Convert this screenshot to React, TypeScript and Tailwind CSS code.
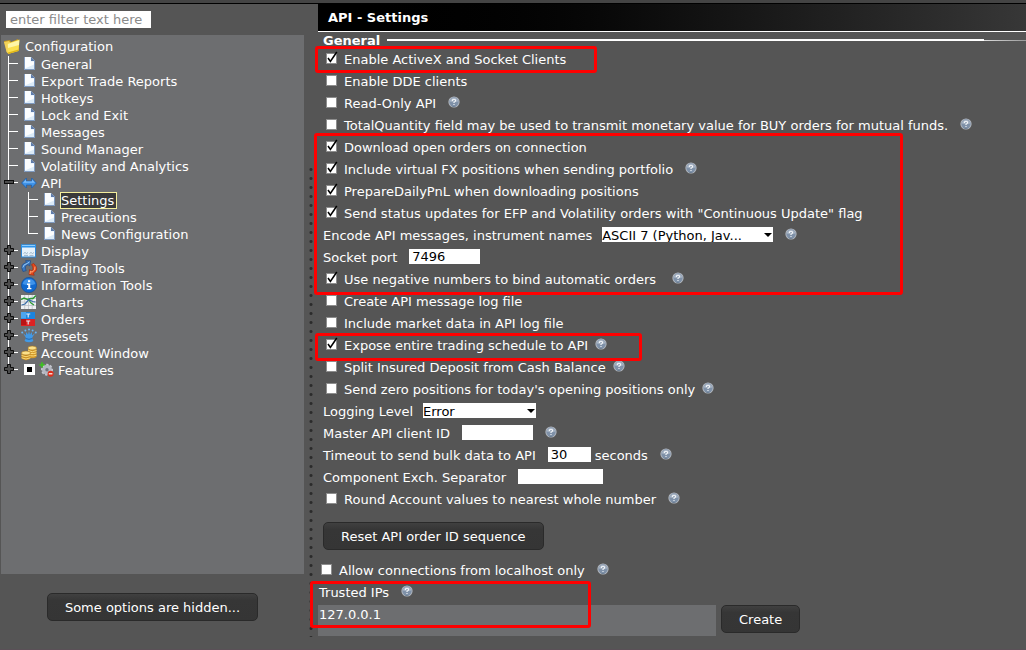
import { useId, useState } from "react";
import type { ReactNode } from "react";

/* ---------- icons ---------- */

function HelpIcon() {
  return (
    <svg width="12" height="12" viewBox="0 0 12 12" role="img" aria-label="Help" className="mb-0.5 shrink-0">
      <circle cx="6" cy="6" r="5.6" fill="#b4b9c0" />
      <circle cx="6" cy="6" r="4.7" fill="#7f91a8" />
      <path d="M1.6 5.4 A4.5 4.5 0 0 1 10.4 5.4 Q6 7 1.6 5.4Z" fill="#a3b0c1" />
      <path d="M8.5 9.8 A4.6 4.6 0 0 1 3.2 9.7 Q6 10.6 8.5 9.8Z" fill="#4f637d" />
      <path d="M4.3 4.9 Q4.3 3.3 6 3.3 Q7.7 3.3 7.6 4.7 Q7.5 5.5 6 6.3 V7 M6 7.9 V8.9" fill="none" stroke="#f4f7fa" strokeWidth="1.1" />
    </svg>
  );
}

function FolderIcon() {
  return (
    <svg width="18" height="17" viewBox="0 0 18 17" className="shrink-0">
      <path d="M1 3 L7 2 L8 4 L15 1 L16 12 L4 15 Z" fill="#c79a1c" />
      <path d="M1 4 L6 3 L7.5 5 L5 15.5 L3.6 14 Z" fill="#f3d25a" />
      <path d="M4.5 5.5 L16.5 1.5 L15.5 13 L5 16 Z" fill="#fbe04f" />
      <path d="M4.8 6 L16.2 2.2 L16 7 L5 10 Z" fill="#fff6a8" />
      <path d="M5 16 L15.5 13 L15.6 11.6 L5 14.6Z" fill="#e0b416" />
    </svg>
  );
}

function DocIcon() {
  return (
    <svg width="11" height="13" viewBox="0 0 11 13" className="shrink-0">
      <path d="M0 0 H7 L11 4 V13 H0 Z" fill="#dcebf8" />
      <path d="M0.8 0 H6.6 V4.4 H10 V7.5 L0.8 11.5 Z" fill="#fbfdff" />
      <path d="M7 0 V4 H11 Z" fill="#5f7cab" />
      <path d="M0.4 0 V12.6 H10.6 V4" fill="none" stroke="#5b78a8" strokeWidth="0.8" />
    </svg>
  );
}

function ApiIcon() {
  return (
    <svg width="16" height="12" viewBox="0 0 16 12">
      <path d="M0.6 6 L5.4 1 V4 H10.6 V1 L15.4 6 L10.6 11 V8 H5.4 V11 Z" fill="#3f93e8" stroke="#1b5cab" strokeWidth="0.7" />
      <path d="M2 5.8 L5 2.6 V4.6 H11 V2.6 L14 5.8Z" fill="#7dbcf8" />
    </svg>
  );
}

function DisplayIcon() {
  return (
    <svg width="15" height="14" viewBox="0 0 15 14">
      <rect x="0.5" y="1" width="14" height="12" fill="#e6f1fa" stroke="#2f86d6" />
      <rect x="0" y="0.5" width="15" height="3" fill="#2f94ea" />
      <rect x="1" y="1" width="13" height="1" fill="#8fcbfa" />
      <path d="M2.5 9.5 l1.5-1 1.5 1 1.5-1 M8.5 9.5 l1.5-1 1.5 1 1.5-1 M3 11.4 H7 M8.5 11.4 H12.5" stroke="#8da7bd" strokeWidth="0.8" fill="none" />
    </svg>
  );
}

function TradingIcon() {
  return (
    <svg width="17" height="16" viewBox="0 0 17 16">
      <path d="M2 11.5 Q-1.5 4 5.4 2.6 L4.6 0.6 L9.6 0.8 L8.6 6 L7 4.6 Q2.8 6 5.2 10.6 Z" fill="#3a78bf" stroke="#1b4a8c" strokeWidth="0.7" />
      <path d="M1.8 7.5 Q2.4 4.2 6.4 3.4 L8.6 1.8" fill="none" stroke="#9ccbf5" strokeWidth="1" />
      <path d="M12.6 3.4 Q19 9.6 12.4 13 L13.2 15.2 L8 14.6 L8.6 9.6 L10.4 11 Q13.6 8.8 10.6 4.6 Z" fill="#e4481c" stroke="#ab2a0c" strokeWidth="0.7" />
      <path d="M9 14 L9.4 11.2 L11 12.2 Q14.8 10.4 14 6.6" fill="none" stroke="#ffab78" strokeWidth="1" />
    </svg>
  );
}

function InfoIcon() {
  return (
    <svg width="16" height="16" viewBox="0 0 16 16">
      <circle cx="8" cy="8" r="7.6" fill="#1169cf" stroke="#0a4c9c" strokeWidth="0.6" />
      <path d="M1.6 7 A6.6 6.6 0 0 1 14.4 7 Q8 9.5 1.6 7Z" fill="#3f93ea" />
      <rect x="7" y="3.2" width="2.2" height="2" fill="#fff" />
      <path d="M6 6.6 H9.2 V11 H10.4 V12.3 H6 V11 H7.2 V7.9 H6 Z" fill="#fff" />
    </svg>
  );
}

function ChartsIcon() {
  return (
    <svg width="15" height="14" viewBox="0 0 15 14">
      <rect width="15" height="14" fill="#eef0f2" />
      <path d="M0 3.5 H15 M0 7 H15 M0 10.5 H15 M3.7 0 V14 M7.5 0 V14 M11.2 0 V14" stroke="#b4bac2" strokeWidth="0.7" />
      <path d="M0 4.5 L3 3 L6.5 4.5 L9.5 3.5 L12 3.6 L15 0.6" fill="none" stroke="#2c9a35" strokeWidth="1.5" />
      <path d="M8 5 L10 8 L13 10" fill="none" stroke="#2c9a35" strokeWidth="1.2" />
      <path d="M0.5 10 L4 9 L8 4.6 L11.5 6.5 L14.5 7" fill="none" stroke="#3a6ea8" strokeWidth="1.2" />
    </svg>
  );
}

function OrdersIcon() {
  return (
    <svg width="14" height="14" viewBox="0 0 14 14">
      <rect width="14" height="7" fill="#1c84dd" />
      <rect y="7" width="14" height="7" fill="#dc2222" />
      <path d="M0 0 H5 V6.5 H0Z" fill="#4ba5ef" />
      <path d="M0 7 H5 V13 H0Z" fill="#b91414" />
      <path d="M5.2 2 H9.2 M7.2 2 V5.4 M5.2 9 H9.2 M7.2 9 V12.4" stroke="#e6eef6" strokeWidth="1.1" />
    </svg>
  );
}

function PresetsIcon() {
  return (
    <svg width="16" height="15" viewBox="0 0 16 15">
      <path d="M2 5 L5 7.4 L5 4 L7 6.6 L8 3 L9 6.6 L11 4 L11 7.4 L14 5 L11 10 L12.5 13 Q8 15.5 3.5 13 L5 10 Z" fill="#4199e6" />
      <g fill="#69b7f7">
        <circle cx="1.2" cy="4.6" r="1" />
        <circle cx="4.4" cy="2.6" r="1" />
        <circle cx="8" cy="1.4" r="1" />
        <circle cx="11.6" cy="2.6" r="1" />
        <circle cx="14.8" cy="4.6" r="1" />
      </g>
      <path d="M4.8 10.6 Q8 12 11.2 10.6" stroke="#2268b3" fill="none" />
    </svg>
  );
}

function CoinsIcon() {
  return (
    <svg width="16" height="16" viewBox="0 0 16 16">
      <path d="M7 3 V12 Q11.5 14.5 15.5 12 V3 Z" fill="#d49a2a" />
      <path d="M0.5 8 V13.5 Q5 17 9.5 13.5 V8 Z" fill="#c98f24" />
      <ellipse cx="11.2" cy="3" rx="4.3" ry="2" fill="#fbe08a" stroke="#a8741a" strokeWidth="0.6" />
      <path d="M7 5.5 Q11.5 8 15.5 5.5 M9.5 8.4 Q13 9 15.5 7.8 M9.5 10.8 Q13 11.4 15.5 10.2" fill="none" stroke="#fbdc7c" strokeWidth="1" />
      <ellipse cx="5" cy="8" rx="4.5" ry="2" fill="#fbe08a" stroke="#a8741a" strokeWidth="0.6" />
      <path d="M0.6 10.5 Q5 13 9.4 10.5 M0.6 12.8 Q5 15.3 9.4 12.8" fill="none" stroke="#fbdc7c" strokeWidth="1" />
    </svg>
  );
}

function FeaturesIcon() {
  return (
    <svg width="15" height="15" viewBox="0 0 15 15" className="mb-0.5 shrink-0">
      <circle cx="8" cy="7.8" r="5" fill="#a9acb6" stroke="#c6c9d2" strokeWidth="2" strokeDasharray="2.2 1.5" />
      <circle cx="8" cy="7.8" r="4.6" fill="#b5b8c2" />
      <circle cx="8" cy="7.8" r="1.7" fill="#73767f" />
      <path d="M3 0.2 V5.4 M0.4 2.8 H5.6" stroke="#3fbf25" strokeWidth="1.8" />
      <circle cx="11.6" cy="11.8" r="3" fill="#dd2f1c" />
      <path d="M9.8 11.8 H13.4" stroke="#fff" strokeWidth="1.2" />
    </svg>
  );
}

/* ---------- tree ---------- */

type Branch = "tee" | "end" | "through" | "plus" | "plusEnd" | "minus";

function Connector({ kind }: { kind: Branch }) {
  const half = kind === "end" || kind === "plusEnd";
  return (
    <svg width="20" height="17" viewBox="0 0 20 17" className="shrink-0" aria-hidden="true">
      <rect x="7" y="0" width="1" height={half ? 8 : 17} fill="#fff" />
      {kind !== "through" && <rect x="7" y="7" width="10" height="1" fill="#fff" />}
      {(kind === "plus" || kind === "plusEnd") && (
        <path d="M6.5 2.5 H9.5 V5.5 H12.5 V8.5 H9.5 V11.5 H6.5 V8.5 H3.5 V5.5 H6.5 Z" fill="#4c4c4c" stroke="#0c0c0c" strokeWidth="1" />
      )}
      {kind === "minus" && <rect x="3.5" y="5.5" width="9" height="3" fill="#4c4c4c" stroke="#0c0c0c" strokeWidth="1" />}
    </svg>
  );
}

interface Node {
  label: string;
  lines: Branch[];
  icon: ReactNode;
  selected?: boolean;
}

const doc = (
  <span className="pl-[3px]">
    <DocIcon />
  </span>
);

const nodes: Node[] = [
  { label: "General", lines: ["tee"], icon: doc },
  { label: "Export Trade Reports", lines: ["tee"], icon: doc },
  { label: "Hotkeys", lines: ["tee"], icon: doc },
  { label: "Lock and Exit", lines: ["tee"], icon: doc },
  { label: "Messages", lines: ["tee"], icon: doc },
  { label: "Sound Manager", lines: ["tee"], icon: doc },
  { label: "Volatility and Analytics", lines: ["tee"], icon: doc },
  { label: "API", lines: ["minus"], icon: <ApiIcon /> },
  { label: "Settings", lines: ["through", "tee"], icon: doc, selected: true },
  { label: "Precautions", lines: ["through", "tee"], icon: doc },
  { label: "News Configuration", lines: ["through", "end"], icon: doc },
  { label: "Display", lines: ["plus"], icon: <DisplayIcon /> },
  { label: "Trading Tools", lines: ["plus"], icon: <TradingIcon /> },
  { label: "Information Tools", lines: ["plus"], icon: <InfoIcon /> },
  { label: "Charts", lines: ["plus"], icon: <ChartsIcon /> },
  { label: "Orders", lines: ["plus"], icon: <OrdersIcon /> },
  { label: "Presets", lines: ["plus"], icon: <PresetsIcon /> },
  { label: "Account Window", lines: ["plus"], icon: <CoinsIcon /> },
];

function TreeRow({ node }: { node: Node }) {
  return (
    <li className="flex h-[17px] items-center">
      {node.lines.map((kind, i) => (
        <Connector key={i} kind={kind} />
      ))}
      <span className="flex w-[19px] shrink-0 items-center pb-0.5">{node.icon}</span>
      <a
        href="#settings"
        className={
          node.selected
            ? "flex h-[17px] items-center border border-[#f4ee9c] bg-[#3a3a3a] pr-0.5 whitespace-nowrap"
            : "flex h-[17px] items-center border border-transparent whitespace-nowrap"
        }
      >
        {node.label}
      </a>
    </li>
  );
}

/* ---------- form parts ---------- */

function Check({ label, checked = false }: { label: string; checked?: boolean }) {
  const [on, setOn] = useState(checked);
  return (
    <label className="flex items-center gap-[7px]">
      <span className="relative mb-0.5 flex">
        <input
          type="checkbox"
          checked={on}
          onChange={(e) => setOn(e.target.checked)}
          className="size-[11px] appearance-none border border-[#8d8d8d] bg-white"
        />
        {on && (
          <svg width="13" height="13" viewBox="0 0 13 13" className="pointer-events-none absolute -top-0.5 left-0">
            <path d="M2 7 L4.4 10.4 L10.8 1" fill="none" stroke="#000" strokeWidth="1.6" />
          </svg>
        )}
      </span>
      {label}
    </label>
  );
}

function CheckRow({ label, checked, help }: { label: string; checked?: boolean; help?: "near" | "normal" | "far" }) {
  return (
    <div className="flex h-[22px] items-center pl-2">
      <Check label={label} checked={checked} />
      {help && (
        <span className={help === "near" ? "pl-[7px]" : help === "far" ? "pl-4" : "pl-3"}>
          <HelpIcon />
        </span>
      )}
    </div>
  );
}

function FieldRow({
  label,
  width,
  value = "",
  suffix,
  help,
}: {
  label: string;
  width: string;
  value?: string;
  suffix?: string;
  help?: boolean;
}) {
  const id = useId();
  return (
    <div className="flex h-[22px] items-center pl-[5px]">
      <label htmlFor={id} className="pr-3">
        {label}
      </label>
      <input id={id} type="text" defaultValue={value} className={`mb-px h-[15px] bg-white px-[3px] text-black outline-none ${width}`} />
      {suffix && <span className="pl-1">{suffix}</span>}
      {help && (
        <span className="pl-3">
          <HelpIcon />
        </span>
      )}
    </div>
  );
}

function SelectRow({ label, width, options, help }: { label: string; width: string; options: string[]; help?: boolean }) {
  const id = useId();
  return (
    <div className="flex h-[22px] items-center pl-[5px]">
      <label htmlFor={id} className="pr-[10px]">
        {label}
      </label>
      <span className="relative mb-px flex">
        <select id={id} className={`h-[15px] appearance-none bg-white text-black outline-none ${width}`}>
          {options.map((o) => (
            <option key={o}>{o}</option>
          ))}
        </select>
        <svg width="8" height="4" viewBox="0 0 8 4" className="pointer-events-none absolute top-1.5 right-px">
          <path d="M0 0 H8 L4 4 Z" fill="#000" />
        </svg>
      </span>
      {help && (
        <span className="pl-3">
          <HelpIcon />
        </span>
      )}
    </div>
  );
}

function Marked({ box, children }: { box: string; children: ReactNode }) {
  return (
    <div className="relative">
      {children}
      <div className={`pointer-events-none absolute rounded-[3px] border-3 border-[#fe0000] ${box}`} />
    </div>
  );
}

function DarkButton({ children }: { children: ReactNode }) {
  return (
    <button
      type="button"
      className="h-7 rounded-[5px] border border-[#2a2a2a] bg-linear-to-b from-[#404040] via-[#363636] via-25% to-[#353535] px-[17px] whitespace-nowrap"
    >
      {children}
    </button>
  );
}

export default function App() {
  return (
    <div className="flex min-h-screen flex-col border-b border-[#5a5057] bg-[#555555] font-['DejaVu_Sans',Verdana,sans-serif] text-[13px] leading-[17px] text-white">
      <div className="h-1 border-b border-black bg-[#444444]" />
      <div className="flex flex-1">
        <aside className="flex w-[304px] shrink-0 flex-col pt-[7px] pl-px">
          <input
            type="text"
            aria-label="Filter"
            placeholder="enter filter text here"
            className="ml-[5px] h-[17px] w-[145px] bg-white px-1 text-black outline-none placeholder:text-[#8a8a8a]"
          />
          <nav className="mt-[7px] flex-1 bg-[#6d6e70] pt-0.5">
            <div className="flex h-[19px] items-center gap-1 pl-0.5">
              <FolderIcon />
              <a href="#configuration">Configuration</a>
            </div>
            <ul>
              {nodes.map((n) => (
                <TreeRow key={n.label} node={n} />
              ))}
              <li className="flex h-[17px] items-center">
                <Connector kind="plusEnd" />
                <label className="flex items-center gap-1 pl-[3px]">
                  <input
                    type="checkbox"
                    defaultChecked
                    className="mb-0.5 size-[11px] appearance-none border-3 border-white bg-black"
                  />
                  <FeaturesIcon />
                  Features
                </label>
              </li>
            </ul>
          </nav>
          <div className="flex justify-center pt-[19px] pb-7">
            <DarkButton>Some options are hidden...</DarkButton>
          </div>
        </aside>

        <div className="mt-[161px] mb-3 w-[14px] shrink-0 bg-[radial-gradient(circle,#2b2b2b_1px,transparent_2px)] bg-size-[14px_9px]" />

        <main className="min-w-0 flex-1 whitespace-nowrap">
          <h1 className="flex h-7 items-center border-b border-white bg-linear-to-r from-black to-[#373737] pl-[10px] font-bold">
            API - Settings
          </h1>
          <h2 className="flex h-4 items-center pl-[5px] font-bold">
            General
            <span className="ml-[7px] h-0.5 flex-1 bg-white" />
            <span className="mt-px h-px w-[42px] bg-linear-to-r from-[#dddddd] to-[#999999]" />
          </h2>

          <Marked box="-top-0.5 -bottom-[3px] -left-[3px] w-[282px]">
            <CheckRow label="Enable ActiveX and Socket Clients" checked />
          </Marked>
          <CheckRow label="Enable DDE clients" />
          <CheckRow label="Read-Only API" help="normal" />
          <CheckRow
            label="TotalQuantity field may be used to transmit monetary value for BUY orders for mutual funds."
            help="normal"
          />
          <Marked box="-top-[3px] -bottom-[5px] -left-1 w-[589px]">
            <CheckRow label="Download open orders on connection" checked />
            <CheckRow label="Include virtual FX positions when sending portfolio" checked help="normal" />
            <CheckRow label="PrepareDailyPnL when downloading positions" checked />
            <CheckRow label={'Send status updates for EFP and Volatility orders with "Continuous Update" flag'} checked />
            <SelectRow
              label="Encode API messages, instrument names"
              width="w-[171px]"
              options={["ASCII 7 (Python, Jav..."]}
              help
            />
            <FieldRow label="Socket port" width="w-[71px]" value="7496" />
            <CheckRow label="Use negative numbers to bind automatic orders" checked help="far" />
          </Marked>
          <CheckRow label="Create API message log file" />
          <CheckRow label="Include market data in API log file" />
          <Marked box="-top-px -bottom-[5px] -left-[3px] w-[327px]">
            <CheckRow label="Expose entire trading schedule to API" checked help="near" />
          </Marked>
          <CheckRow label="Split Insured Deposit from Cash Balance" help="near" />
          <CheckRow label="Send zero positions for today's opening positions only" help="near" />
          <SelectRow label="Logging Level" width="w-[113px]" options={["Error"]} />
          <FieldRow label="Master API client ID" width="w-[71px]" help />
          <FieldRow label="Timeout to send bulk data to API" width="w-[43px]" value="30" suffix="seconds" help />
          <FieldRow label="Component Exch. Separator" width="w-[85px]" />
          <CheckRow label="Round Account values to nearest whole number" help="normal" />

          <div className="pt-3 pb-[9px] pl-[5px]">
            <DarkButton>Reset API order ID sequence</DarkButton>
          </div>

          <div className="flex h-[22px] items-center pl-[3px]">
            <Check label="Allow connections from localhost only" />
            <span className="pl-3">
              <HelpIcon />
            </span>
          </div>
          <Marked box="top-0 bottom-2 -left-2 w-[281px]">
            <div className="flex h-6 items-center pb-0.5 pl-px">
              Trusted IPs
              <span className="pl-3">
                <HelpIcon />
              </span>
            </div>
            <div className="flex items-start gap-[5px]">
              <ul className="h-[31px] w-[398px] bg-[#6d6e70] pt-px pl-px">
                <li>127.0.0.1</li>
              </ul>
              <DarkButton>Create</DarkButton>
            </div>
          </Marked>
        </main>
      </div>
    </div>
  );
}
